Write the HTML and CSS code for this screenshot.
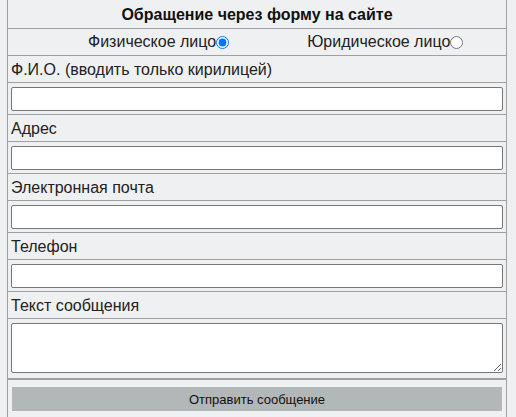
FILE: index.html
```html
<!DOCTYPE html>
<html lang="ru">
<head>
<meta charset="utf-8">
<link rel="stylesheet" href="styles.css">
</head>
<body>
<form class="form">
  <div class="row head">Обращение через форму на сайте</div>
  <div class="row radios">
    <label class="opt opt1">Физическое лицо<input type="radio" name="t" checked></label>
    <label class="opt opt2">Юридическое лицо<input type="radio" name="t"></label>
  </div>
  <div class="row lbl">Ф.И.О. (вводить только кирилицей)</div>
  <div class="row fld"><input class="inp" type="text"></div>
  <div class="row lbl">Адрес</div>
  <div class="row fld"><input class="inp" type="text"></div>
  <div class="row lbl">Электронная почта</div>
  <div class="row fld"><input class="inp" type="text"></div>
  <div class="row lbl">Телефон</div>
  <div class="row fld"><input class="inp" type="text"></div>
  <div class="row lbl">Текст сообщения</div>
  <div class="row fld"><textarea class="ta"></textarea></div>
  <div class="row btnrow"><button type="button" class="btn">Отправить сообщение</button></div>
</form>
</body>
</html>
```
FILE: styles.css
```css
html, body {
  margin: 0;
  padding: 0;
  background: #eff0f1;
  font-family: "Liberation Sans", Arial, sans-serif;
  font-size: 16px;
  color: #222;
}
.form {
  margin-left: 7px;
  width: 500px;
  box-sizing: border-box;
  border-left: 1px solid #a0a0a0;
  border-right: 1px solid #a0a0a0;
  background: #eff0f1;
}
.row {
  border-bottom: 1px solid #a0a0a0;
  box-sizing: border-box;
}
.head {
  height: 29px;
  font-weight: bold;
  font-size: 16px;
  text-align: center;
  line-height: 29px;
  color: #111;
}
.radios {
  height: 27px;
  display: flex;
  align-items: center;
}
.opt {
  display: flex;
  align-items: center;
}
.opt1 { margin-left: 80px; }
.opt2 { margin-left: 78px; }
.opt input {
  margin: 0;
  width: 13px;
  height: 13px;
}
.lbl {
  height: 27px;
  line-height: 27px;
  padding-left: 3px;
}
.fld {
  height: 32px;
  padding: 4px 3px 0 3px;
}
.inp {
  display: block;
  width: 100%;
  height: 24px;
  box-sizing: border-box;
  border: 1px solid #767676;
  border-radius: 2px;
  background: #fff;
  margin: 0;
}
.fld:has(.ta) {
  height: 60px;
}
.ta {
  display: block;
  width: 100%;
  height: 50px;
  box-sizing: border-box;
  border: 1px solid #767676;
  border-radius: 2px;
  background: #fff;
  margin: 0;
  resize: vertical;
}
.btnrow {
  border-top: 1px solid #a0a0a0;
  border-bottom: none;
  padding: 7px 4px 6px 4px;
}
.btn {
  display: block;
  width: 100%;
  height: 24px;
  border: none;
  background: #b2b7b8;
  font-family: "Liberation Sans", Arial, sans-serif;
  font-size: 13px;
  color: #111;
}
```
